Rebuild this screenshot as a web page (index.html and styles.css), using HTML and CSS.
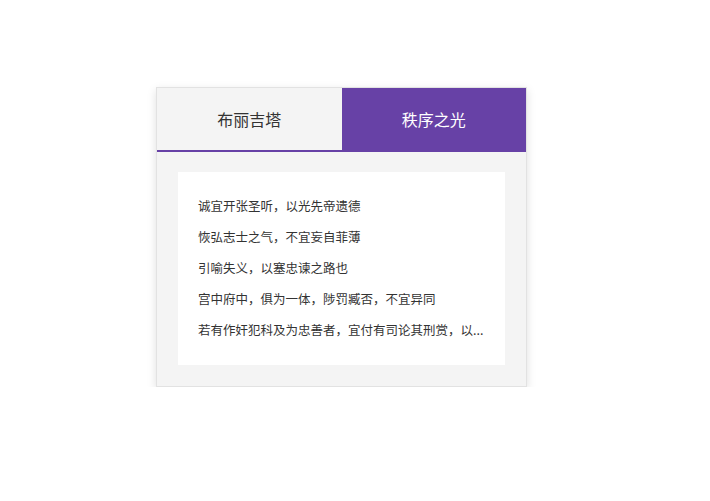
FILE: index.html
```html
<!DOCTYPE html>
<html lang="zh">
<head>
<meta charset="utf-8">
<link rel="stylesheet" href="styles.css">
</head>
<body>
<div class="page">
  <div class="card">
    <div class="tabs">
      <div class="tab">布丽吉塔</div>
      <div class="tab active">秩序之光</div>
    </div>
    <div class="body">
      <div class="panel">
        <p class="line">诚宜开张圣听，以光先帝遗德</p>
        <p class="line">恢弘志士之气，不宜妄自菲薄</p>
        <p class="line">引喻失义，以塞忠谏之路也</p>
        <p class="line">宫中府中，俱为一体，陟罚臧否，不宜异同</p>
        <p class="line">若有作奸犯科及为忠善者，宜付有司论其刑赏，以...</p>
      </div>
    </div>
  </div>
</div>
</body>
</html>
```

FILE: styles.css
```css
html, body {
  margin: 0;
  padding: 0;
  background: #ffffff;
}
body {
  font-family: "Noto Sans CJK SC", "Noto Sans", sans-serif;
  color: #333333;
}
.page {
  padding: 87px 0 0 156px;
}
.card {
  width: 369px;
  border: 1px solid #e2e2e2;
  background: #f4f4f4;
  box-shadow: 0 3px 9px rgba(0, 0, 0, 0.13);
}
.tabs {
  display: flex;
  border-bottom: 2px solid #6741a6;
}
.tab {
  flex: 1;
  height: 62px;
  display: flex;
  align-items: center;
  justify-content: center;
  font-size: 16px;
  color: #333333;
  background: #f4f4f4;
}
.tab.active {
  background: #6741a6;
  color: #ffffff;
}
.body {
  padding: 20px 21px 21px 21px;
}
.panel {
  background: #ffffff;
  padding: 18px 20px 20px 20px;
}
.line {
  margin: 0;
  font-size: 12.5px;
  line-height: 31px;
  height: 31px;
  white-space: nowrap;
}
```
